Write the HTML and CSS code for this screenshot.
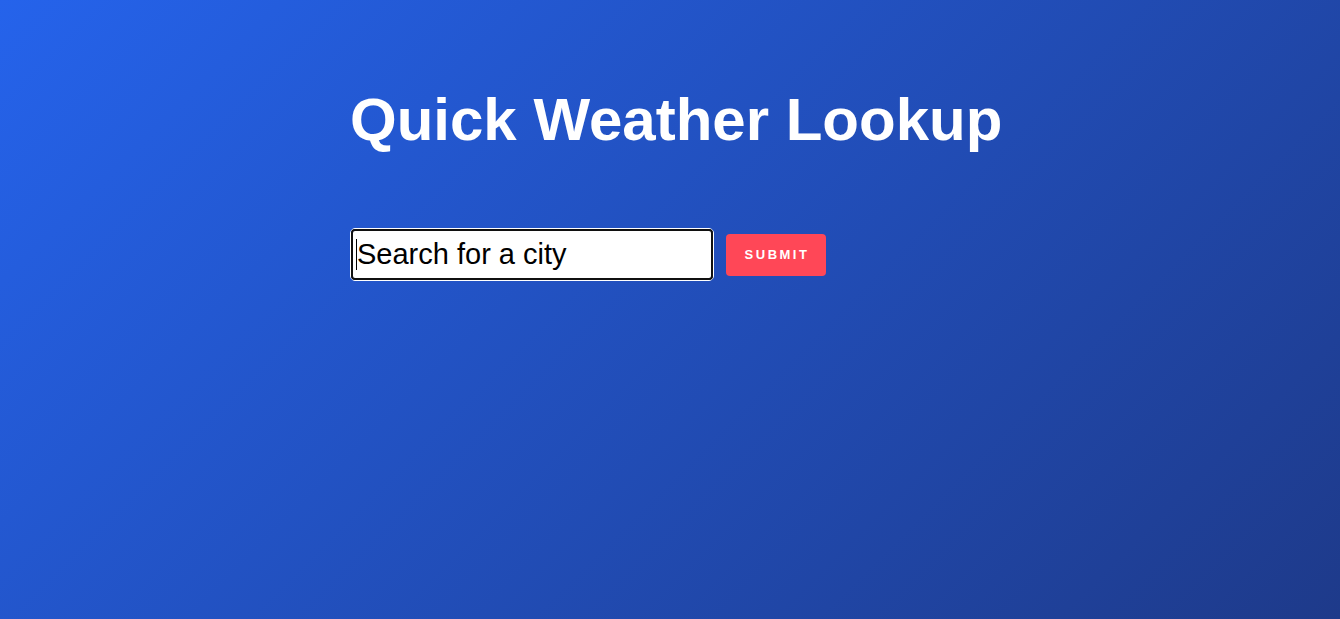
FILE: index.html
```html
<!DOCTYPE html>
<html lang="en">
<head>
<meta charset="utf-8">
<title>Quick Weather Lookup</title>
<link rel="stylesheet" href="styles.css">
</head>
<body>
<main class="app">
  <h1 class="title">Quick Weather Lookup</h1>
  <form class="search" onsubmit="return false">
    <div class="field">
      <span class="caret"></span>
      <input class="city" type="text" placeholder="Search for a city">
    </div>
    <button class="submit" type="submit">Submit</button>
  </form>
</main>
</body>
</html>
```

FILE: styles.css
```css
html, body {
  margin: 0;
  height: 100%;
}
body {
  background: linear-gradient(135deg, #2563eb 0%, #1e3a8a 100%);
  font-family: "Liberation Sans", Arial, sans-serif;
  color: #fff;
}
.app {
  width: 640px;
  margin: 0 auto;
  padding-top: 85px;
}
.title {
  margin: 0 0 74px;
  font-size: 60px;
  line-height: 69px;
  font-weight: 700;
  white-space: nowrap;
}
.search {
  display: flex;
  align-items: center;
  gap: 12px;
}
.field {
  position: relative;
  box-sizing: border-box;
  width: 364px;
  height: 53px;
  border: 1px solid #fff;
  border-radius: 5px;
}
.city {
  box-sizing: border-box;
  display: block;
  width: 100%;
  height: 100%;
  margin: 0;
  padding: 0 4px;
  border: 2px solid #101010;
  border-radius: 4px;
  background: #fff;
  font-family: "Liberation Sans", Arial, sans-serif;
  font-size: 29px;
  color: #000;
  outline: none;
}
.city::placeholder {
  color: #000;
  opacity: 1;
}
.caret {
  position: absolute;
  left: 5px;
  top: 10px;
  width: 1px;
  height: 31px;
  background: #000;
  z-index: 1;
}
.submit {
  box-sizing: border-box;
  width: 100px;
  height: 42px;
  padding: 0 0 0 2px;
  border: none;
  border-radius: 4px;
  background: #ff4757;
  color: #fff;
  font-family: "Liberation Sans", Arial, sans-serif;
  font-size: 13px;
  font-weight: 700;
  letter-spacing: 2.5px;
  text-transform: uppercase;
  cursor: pointer;
}
```
